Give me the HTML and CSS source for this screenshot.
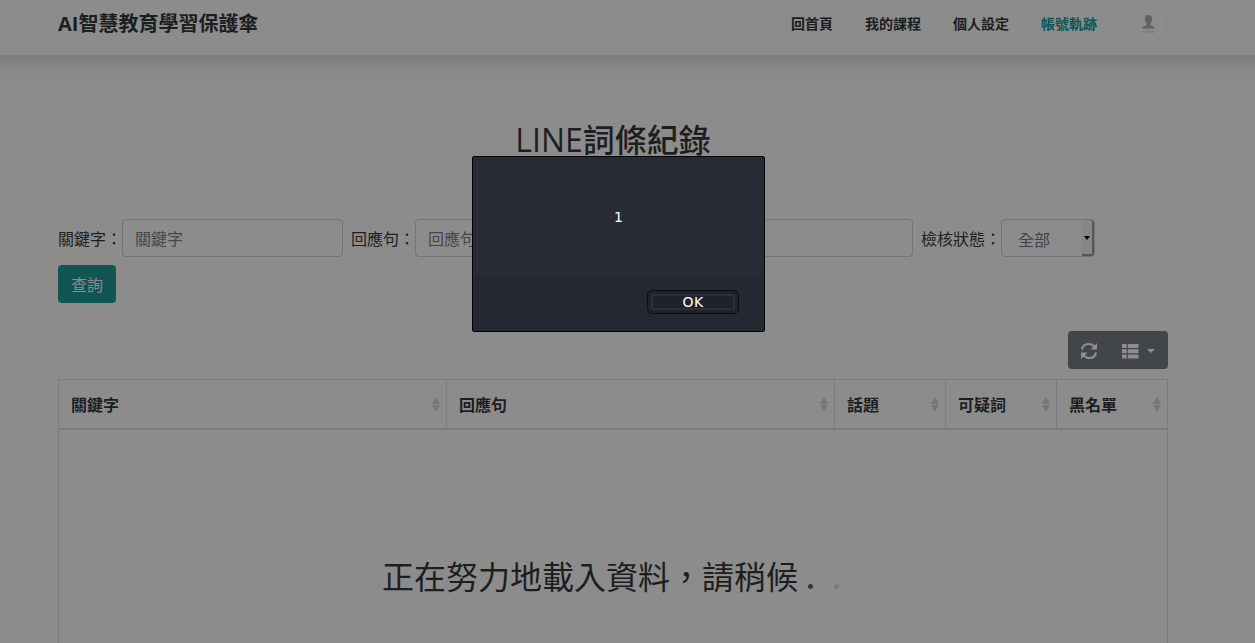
FILE: index.html
```html
<!DOCTYPE html>
<html lang="zh-Hant">
<head>
<meta charset="utf-8">
<title>LINE詞條紀錄</title>
<link rel="stylesheet" href="styles.css">
</head>
<body>
<header class="header">
  <div class="container nav-row">
    <a class="brand">AI智慧教育學習保護傘</a>
    <nav class="nav">
      <a>回首頁</a><a>我的課程</a><a>個人設定</a><a class="active">帳號軌跡</a>
      <span class="avatar">
        <svg width="16" height="20" viewBox="0 0 16 20"><path fill="#606060" d="M7.500 1c2.500 0 3.700 1.500 3.700 4 0 2-.8 3.300-1.800 4.300v1.400c.6 1.600 4.600 1.300 4.600 3.800H1c0-2.500 4-2.200 4.600-3.800V9.300C4.600 8.300 3.800 7 3.800 5c0-2.500 1.200-4 3.700-4z"/><path stroke="#747474" stroke-width="2" stroke-dasharray="2 1" d="M2 17.500h11"/></svg>
      </span>
    </nav>
  </div>
</header>
<main class="container">
  <h2 class="title"><span class="latin">LINE</span>詞條紀錄</h2>
  <form class="filters">
    <label>關鍵字：</label><input class="field keyword" placeholder="關鍵字">
    <label>回應句：</label><input class="field reply" placeholder="回應句">
    <label>檢核狀態：</label><div class="field select"><span>全部</span><i class="drop"></i></div>
    <button class="query" type="button">查詢</button>
  </form>
  <div class="toolbar">
    <div class="tools">
      <svg width="18" height="18" viewBox="0 0 18 18"><g fill="none" stroke="#8c8e90" stroke-width="2.200"><path d="M2 7.500C2.600 4 5.200 2 8.700 2c2.300 0 4.200 1 5.500 2.700"/><path d="M16 10.500c-.6 3.500-3.200 5.500-6.700 5.500-2.300 0-4.200-1-5.500-2.700"/></g><path fill="#8c8e90" d="M17 1v6.500h-6.500zM1 17v-6.500h6.500z"/></svg>
      <span class="columns">
        <svg width="17" height="15" viewBox="0 0 17 15"><path fill="#8c8e90" d="M0 0h4.600v4H0zM5.800 0H16.500v4H5.800zM0 5.200h4.600v4H0zM5.800 5.200H16.500v4H5.800zM0 10.400h4.600v4H0zM5.800 10.400H16.500v4H5.800z"/></svg>
        <i class="caret"></i>
      </span>
    </div>
  </div>
  <section class="table">
    <div class="thead">
      <div class="th">關鍵字<i class="sort"></i></div>
      <div class="th">回應句<i class="sort"></i></div>
      <div class="th">話題<i class="sort"></i></div>
      <div class="th">可疑詞<i class="sort"></i></div>
      <div class="th">黑名單<i class="sort"></i></div>
    </div>
    <div class="loading">正在努力地載入資料，請稍候<i class="dot"></i><i class="dot faint"></i></div>
  </section>
</main>
<div class="dialog" role="dialog">
  <div class="message">1</div>
  <div class="actions"><button class="ok" type="button"><span>OK</span></button></div>
</div>
</body>
</html>
```
FILE: styles.css
```css
* { box-sizing: border-box; }
body {
  margin: 0;
  height: 643px;
  overflow: hidden;
  position: relative;
  background: #8c8c8c;
  color: #1c1e20;
  font: 16px/24px "Open Sans", "Noto Sans CJK TC", sans-serif;
}
.container { width: 1110px; margin-left: 58px; }
.header { height: 55px; margin: 0 -40px; padding: 0 40px; box-shadow: 0 4px 20px rgba(0,0,0,.17); }
.nav-row { display: flex; justify-content: space-between; height: 47px; align-items: center; }
.brand { font-size: 20px; font-weight: 700; padding-top: 1px; }
.nav { display: flex; align-items: center; gap: 32px; font-size: 14px; font-weight: 700; }
.nav a { padding-top: 1px; }
.nav .active { color: #115655; }
.avatar {
  width: 39px; height: 39px;
  border: 1px solid #888; border-radius: 50%;
  display: flex; align-items: center; justify-content: center;
}
.title { margin: 66px 0 0; height: 38px; line-height: 38px; text-align: center; font-size: 32px; font-weight: 500; }
.latin { font-weight: 400; }
.filters { margin-top: 60px; display: flex; flex-wrap: wrap; row-gap: 8px; align-items: center; }
.filters label { width: 64px; padding-top: 2px; white-space: nowrap; }
.filters label:nth-of-type(3) { width: 80px; }
.field {
  height: 38px; border: 1px solid #727475; border-radius: 4px;
  background: transparent; padding: 2px 12px 0; margin-right: 8px;
  font: inherit; color: #3f4346;
}
.field::placeholder { color: #44484c; opacity: 1; }
.keyword { width: 221px; }
.reply { width: 498px; }
.select { width: 94px; margin-right: 70px; padding: 0 0 0 16px; display: flex; align-items: center; justify-content: space-between; }
.select span { padding-top: 3px; }
.drop {
  width: 12px; height: 36px; background: #868686;
  border-right: 2px solid #575757; border-bottom: 2px solid #575757; border-radius: 0 3px 3px 0;
  display: flex; align-items: center; justify-content: center;
}
.drop::before { content: ""; margin-top: 1px; border: 3.5px solid transparent; border-top: 4px solid #000; border-bottom: 0; }
.query {
  width: 58px; height: 38px; border: 0; border-radius: 4px; padding: 2px 0 0;
  background: #125654; color: #8c8c8c; font: inherit;
}
.toolbar { display: flex; justify-content: flex-end; margin-top: 28px; }
.tools {
  width: 100px; height: 38px; border-radius: 4px; background: #42464a;
  display: flex; align-items: center; padding: 2px 12px 0; gap: 24px;
}
.columns { display: flex; align-items: center; gap: 8px; }
.caret { border: 4px solid transparent; border-top-color: #8c8e90; border-bottom: 0; }
.table { margin-top: 10px; height: 264px; border: 1px solid #7a7c7e; border-bottom: 0; }
.thead { display: grid; grid-template-columns: 388px 388px 111px 111px 110px; height: 50px; border-bottom: 2px solid #7a7c7e; }
.th {
  display: flex; align-items: center; justify-content: space-between;
  padding: 2px 5px 0 12px; font-weight: 700; border-right: 1px solid #7a7c7e;
}
.th:last-child { border-right: 0; }
.sort { display: grid; gap: 1px; margin: 0 1px 2px 0; }
.sort::before, .sort::after { content: ""; border: 4px solid transparent; }
.sort::before { border-bottom: 7px solid #767676; border-top: 0; }
.sort::after { border-top: 7px solid #767676; border-bottom: 0; }
.loading {
  display: flex; font-size: 32px; line-height: 48px; padding: 123px 0 0 323px; white-space: nowrap;
}
.dot { width: 5px; height: 5px; border-radius: 50%; background: #353739; margin: 31px 21px 0 10px; }
.faint { background: #7a7a7a; margin-left: 0; }
.dialog {
  position: absolute; left: 472px; top: 156px; width: 293px; height: 176px;
  border: 1px solid #000; border-radius: 2px; background: #282a35; color: #fff;
  font: 14px/18px "DejaVu Sans", sans-serif;
  display: flex; flex-direction: column;
}
.message { height: 119px; display: flex; align-items: center; justify-content: center; }
.actions { flex: 1; background: #262831; display: flex; justify-content: flex-end; padding: 14px 25px 0 0; }
.ok {
  width: 92px; height: 24px; padding: 3px; border: 1px solid #0c0d12; border-radius: 5px;
  background: #20222b; color: #fff; font: inherit;
}
.ok span { display: block; height: 16px; line-height: 13px; border: 2px solid #2c2e38; border-radius: 2px; letter-spacing: .5px; }
```
